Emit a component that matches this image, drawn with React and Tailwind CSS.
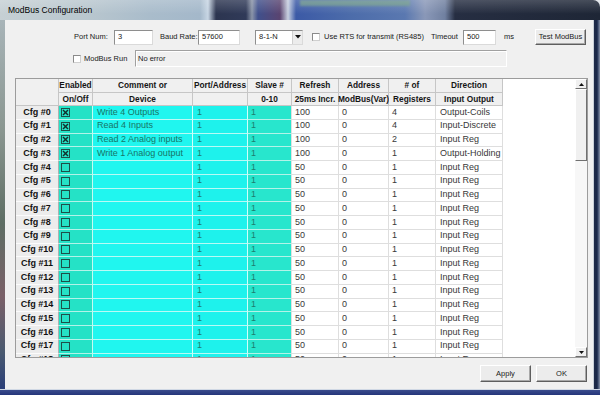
import React from "react";

const F = "font-['Liberation_Sans',Arial,sans-serif]";

function Box({ on }) {
  return (
    <svg width="9" height="9" viewBox="0 0 9 9" className="block">
      <rect x="0.5" y="0.5" width="8" height="8" fill="none" stroke="#1f4f4a" strokeWidth="1" />
      {on && (
        <>
          <line x1="2" y1="2" x2="7" y2="7" stroke="#10302c" strokeWidth="1.4" />
          <line x1="7" y1="2" x2="2" y2="7" stroke="#10302c" strokeWidth="1.4" />
        </>
      )}
    </svg>
  );
}

function WinCheck() {
  return <div className="w-[8px] h-[8px] bg-white border border-t-[#8a8a8a] border-l-[#8a8a8a] border-r-[#cfcfcf] border-b-[#cfcfcf]" />;
}

const rows = [
  { c: "Write 4 Outputs", on: true, r: "100", n: "4", d: "Output-Coils" },
  { c: "Read 4 Inputs", on: true, r: "100", n: "4", d: "Input-Discrete" },
  { c: "Read 2 Analog inputs", on: true, r: "100", n: "2", d: "Input Reg" },
  { c: "Write 1 Analog output", on: true, r: "100", n: "1", d: "Output-Holding" },
];
for (let i = 4; i <= 18; i++) rows.push({ c: "", on: false, r: "50", n: "1", d: "Input Reg" });

const hdr = "shrink-0 bg-[#f0f0f0] border-r border-b border-[#c6c6c6] flex items-center justify-center font-bold text-[8.3px] text-[#151515] whitespace-nowrap";
const wcell = "shrink-0 bg-white border-r border-b border-[#dedede] flex items-center pl-[3px] text-[9px] text-[#383838] whitespace-nowrap";

export default function App() {
  return (
    <div className={`w-[600px] h-[395px] overflow-hidden flex flex-col bg-[#dfe3e8] ${F}`}>
      {/* title bar */}
      <div className="h-[20px] shrink-0 relative rounded-tr-[7px] bg-[linear-gradient(90deg,#c6d0d4_0px,#b8c6ce_90px,#a9bccb_150px,#a4b8ca_200px,#c8d6e4_208px,#2c3550_216px,#303a58_246px,#8a94a8_252px,#40508c_258px,#5a4470_280px,#c8d0e0_288px,#3c5aa6_296px,#4c6caa_350px,#5a78b0_405px,#8a98b8_425px,#7080a0_445px,#262e42_455px,#1e2636_600px)]">
        <div className="absolute top-0 left-[300px] w-[110px] h-[6px] bg-[#6f9c82] opacity-70 blur-[1px]" />
        <div className="absolute inset-0 bg-[linear-gradient(180deg,rgba(255,255,255,0.18),rgba(255,255,255,0)_70%)]" />
        <span className="relative block pl-[8px] leading-[21px] text-[8.5px] text-black">ModBus Configuration</span>
      </div>

      <div className="flex flex-1 min-h-0">
        <div className="w-[5px] shrink-0 bg-[linear-gradient(180deg,#a8b4b8,#8a9690_30%,#5e6e64_55%,#7a6068_75%,#4a5a70_90%,#2a3e78)]" />

        {/* body */}
        <div className="w-[588px] shrink-0 bg-[#f0f0f0] flex flex-col text-[#1a1a1a]">
          {/* row 1 */}
          <div className="mt-[9px] h-[16px] flex items-center text-[7.5px]">
            <div className="ml-[69px] w-[40px]">Port Num:</div>
            <div className="w-[39px] h-[15px] bg-white border border-t-[#8e8e8e] border-l-[#8e8e8e] border-r-[#dadada] border-b-[#dadada] flex items-center pl-[3px]">3</div>
            <div className="ml-[7px] w-[38px]">Baud Rate:</div>
            <div className="w-[42px] h-[15px] bg-white border border-t-[#8e8e8e] border-l-[#8e8e8e] border-r-[#dadada] border-b-[#dadada] flex items-center pl-[3px]">57600</div>
            <div className="ml-[15px] w-[48px] h-[15px] bg-white border border-t-[#8e8e8e] border-l-[#8e8e8e] border-r-[#dadada] border-b-[#dadada] flex items-center">
              <span className="pl-[3px] flex-1">8-1-N</span>
              <div className="w-[10px] h-full bg-[#ececec] border-l border-[#d0d0d0] flex items-center justify-center">
                <svg width="6" height="4" viewBox="0 0 6 4"><path d="M0 0H6L3 3.5Z" fill="#111" /></svg>
              </div>
            </div>
            <div className="ml-[9px]"><WinCheck /></div>
            <div className="ml-[4px] w-[107px]">Use RTS for transmit (RS485)</div>
            <div className="w-[32px]">Timeout</div>
            <div className="w-[33px] h-[15px] bg-white border border-t-[#8e8e8e] border-l-[#8e8e8e] border-r-[#dadada] border-b-[#dadada] flex items-center pl-[3px]">500</div>
            <div className="ml-[8px] w-[31px]">ms</div>
            <div className="w-[51px] h-[16px] bg-[#ececec] border border-t-white border-l-white border-r-[#5e5e5e] border-b-[#5e5e5e] shadow-[inset_-1px_-1px_0_#a8a8a8] flex items-center justify-center">Test ModBus</div>
          </div>

          {/* row 2 */}
          <div className="mt-[5px] h-[17px] flex items-center text-[7.5px]">
            <div className="ml-[68px]"><WinCheck /></div>
            <div className="ml-[3px] w-[51px]">ModBus Run</div>
            <div className="w-[372px] h-[17px] border border-t-[#a0a0a0] border-l-[#a0a0a0] border-r-white border-b-white shadow-[inset_1px_1px_0_#fff] flex items-center pl-[2px]">No error</div>
          </div>

          {/* table */}
          <div className="mt-[11px] ml-[10px] w-[573px] h-[280px] border border-[#9c9c9c] flex bg-white">
            <div className="w-[559px] h-full overflow-hidden flex flex-col">
              {/* header */}
              <div className="flex shrink-0">
                <div className="w-[43px] h-[27px] shrink-0 bg-[#f0f0f0] border-r border-b border-[#c6c6c6]" />
                <div className="flex flex-col">
                  <div className="flex h-[13.5px]">
                    <div className={`${hdr} w-[34px]`}>Enabled</div>
                    <div className={`${hdr} w-[100px]`}>Comment or</div>
                    <div className={`${hdr} w-[55px]`}>Port/Address</div>
                    <div className={`${hdr} w-[44px]`}>Slave #</div>
                    <div className={`${hdr} w-[47px]`}>Refresh</div>
                    <div className={`${hdr} w-[50px]`}>Address</div>
                    <div className={`${hdr} w-[47px]`}># of</div>
                    <div className={`${hdr} w-[67px]`}>Direction</div>
                  </div>
                  <div className="flex h-[13.5px]">
                    <div className={`${hdr} w-[34px]`}>On/Off</div>
                    <div className={`${hdr} w-[100px]`}>Device</div>
                    <div className={`${hdr} w-[55px]`}></div>
                    <div className={`${hdr} w-[44px]`}>0-10</div>
                    <div className={`${hdr} w-[47px]`}>25ms Incr.</div>
                    <div className={`${hdr} w-[50px]`}>ModBus(Var)</div>
                    <div className={`${hdr} w-[47px]`}>Registers</div>
                    <div className={`${hdr} w-[67px]`}>Input Output</div>
                  </div>
                </div>
              </div>
              {/* data */}
              {rows.map((row, i) => (
                <div key={i} className="flex h-[13.75px] shrink-0">
                  <div className="w-[43px] shrink-0 bg-[#ececec] border-r border-b border-r-[#b0b0b0] border-b-[#fbfbfb] flex items-center justify-center font-bold text-[9px] text-[#111] whitespace-nowrap">Cfg #{i}</div>
                  <div className="w-[34px] shrink-0 bg-[#25e2c6] border-r border-b border-r-[#c4fbf2] border-b-[#b4f3e8] flex items-center pl-[2px]"><Box on={row.on} /></div>
                  <div className="w-[100px] shrink-0 bg-[#20f6ef] border-r border-b border-r-[#d0fffb] border-b-[#b8faf5] flex items-center pl-[4px] text-[9px] text-[#187566] whitespace-nowrap">{row.c}</div>
                  <div className="w-[55px] shrink-0 bg-[#1ef2ec] border-r border-b border-r-[#d0fffb] border-b-[#b8faf5] flex items-center pl-[4px] text-[9px] text-[#1e7e70]">1</div>
                  <div className="w-[44px] shrink-0 bg-[#28e6cd] border-r border-b border-r-[#e0e0e0] border-b-[#b4f3e8] flex items-center pl-[3px] text-[9px] text-[#1e7e70]">1</div>
                  <div className={`${wcell} w-[47px]`}>{row.r}</div>
                  <div className={`${wcell} w-[50px]`}>0</div>
                  <div className={`${wcell} w-[47px]`}>{row.n}</div>
                  <div className={`${wcell} w-[67px] pl-[4px]`}>{row.d}</div>
                </div>
              ))}
            </div>
            {/* scrollbar */}
            <div className="w-[12px] h-full flex flex-col bg-[#f7f7f7]">
              <div className="h-[10px] shrink-0 bg-[#f0f0f0] border border-t-white border-l-white border-r-[#707070] border-b-[#707070] flex items-center justify-center">
                <svg width="5" height="3" viewBox="0 0 5 3"><path d="M0 3H5L2.5 0Z" fill="#111" /></svg>
              </div>
              <div className="h-[72px] shrink-0 bg-[#f0f0f0] border border-t-white border-l-white border-r-[#707070] border-b-[#707070]" />
              <div className="flex-1" />
              <div className="h-[10px] shrink-0 bg-[#f0f0f0] border border-t-white border-l-white border-r-[#707070] border-b-[#707070] flex items-center justify-center">
                <svg width="5" height="3" viewBox="0 0 5 3"><path d="M0 0H5L2.5 3Z" fill="#111" /></svg>
              </div>
            </div>
          </div>

          {/* buttons */}
          <div className="mt-[7px] h-[17px] flex justify-end gap-[5px] pr-[6px] text-[7.5px]">
            <div className="w-[51px] h-[17px] bg-[#ececec] border border-t-white border-l-white border-r-[#5e5e5e] border-b-[#5e5e5e] shadow-[inset_-1px_-1px_0_#a8a8a8] flex items-center justify-center">Apply</div>
            <div className="w-[51px] h-[17px] bg-[#ececec] border border-t-white border-l-white border-r-[#5e5e5e] border-b-[#5e5e5e] shadow-[inset_-1px_-1px_0_#a8a8a8] flex items-center justify-center">OK</div>
          </div>
        </div>

        <div className="w-[7px] shrink-0 bg-[linear-gradient(90deg,#c8d0d8_0px,#c8d0d8_1px,#1e2a48_1px,#1a2848_4px,#3a4a6c_5px,#8a94a8_7px)]" />
      </div>
      <div className="h-[6px] shrink-0 bg-[linear-gradient(180deg,#d0d8e4_0px,#d0d8e4_1px,#3a4c8c_1px,#24357a_6px)]" />
    </div>
  );
}
